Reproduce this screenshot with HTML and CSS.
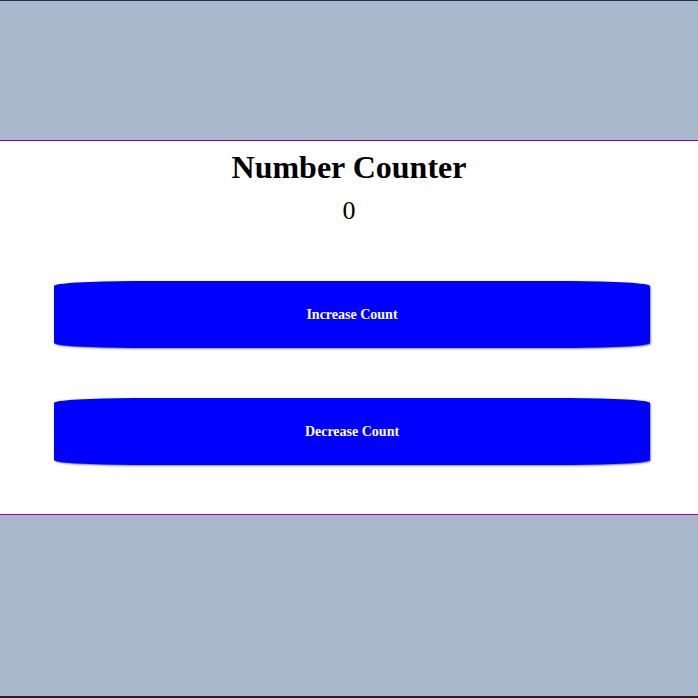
FILE: index.html
```html
<!DOCTYPE html>
<html lang="en">
<head>
<meta charset="utf-8">
<title>Number Counter</title>
<link rel="stylesheet" href="styles.css">
</head>
<body>
<main class="counter">
  <h1 class="counter-title">Number Counter</h1>
  <p class="counter-value">0</p>
  <div class="counter-actions">
    <button class="counter-btn" type="button">Increase Count</button>
    <button class="counter-btn" type="button">Decrease Count</button>
  </div>
</main>
</body>
</html>
```
FILE: styles.css
```css
html, body {
  margin: 0;
  padding: 0;
}
body {
  box-sizing: border-box;
  height: 698px;
  background: #a9b8cd;
  border-top: 1px solid #2b2f38;
  border-bottom: 2px solid #1f232b;
  padding-top: 139px;
  font-family: "Liberation Serif", "DejaVu Serif", serif;
}
.counter {
  background: #ffffff;
  border-top: 1px solid #990099;
  border-bottom: 1px solid #990099;
  height: 373px;
  box-sizing: content-box;
  display: flex;
  flex-direction: column;
  align-items: center;
}
.counter-title {
  margin: 7px 0 0;
  font-size: 32px;
  line-height: 38px;
  font-weight: bold;
  color: #000;
}
.counter-value {
  margin: 10px 0 0;
  font-size: 26px;
  line-height: 30px;
  color: #000;
}
.counter-actions {
  align-self: stretch;
  display: flex;
  flex-direction: column;
  gap: 50px;
  padding: 55px 48px 0 54px;
}
.counter-btn {
  height: 67px;
  background: #0000ff;
  color: #ffffff;
  border: none;
  border-radius: 80px / 5px;
  box-shadow: 1px 1px 2px #888888;
  font-family: "Liberation Serif", "DejaVu Serif", serif;
  font-size: 14px;
  font-weight: bold;
  cursor: pointer;
}
```
